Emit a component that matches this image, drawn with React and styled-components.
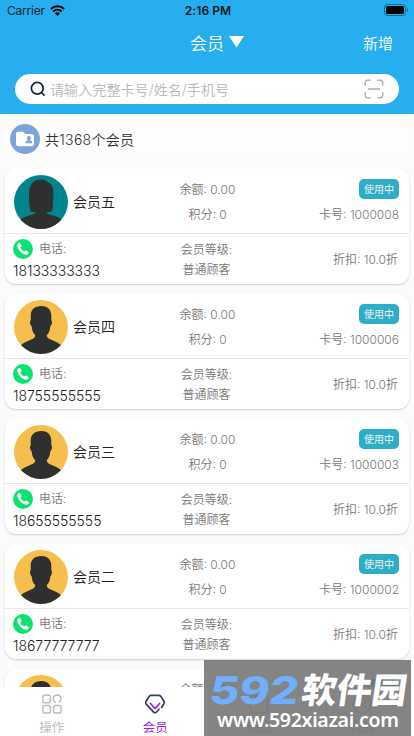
import styled, { createGlobalStyle } from 'styled-components'

const members = [
    { name: '会员五', phone: '18133333333', card: '1000008', female: true },
    { name: '会员四', phone: '18755555555', card: '1000006' },
    { name: '会员三', phone: '18655555555', card: '1000003' },
    { name: '会员二', phone: '18677777777', card: '1000002' },
    { name: '会员一', phone: '18666666666', card: '1000001' },
]

function Avatar({ female }) {
    return (
        <svg width='54' height='54' viewBox='0 0 54 54'>
            <clipPath id={female ? 'clipF' : 'clipM'}><circle cx='27' cy='27' r='27' /></clipPath>
            <circle cx='27' cy='27' r='27' fill={female ? '#00858f' : '#f6bf4d'} />
            <g clipPath={female ? 'url(#clipF)' : 'url(#clipM)'} fill='#2d302f'>
                {female
                    ? <path d='M27 4.500c3-.2 5 1.100 7 3 4 1 5.500 6 5.400 11l-.5 11c0 4-.5 6.500-2.200 7.500L32 37c1 2 3.500 2.500 6 3.200 4 1.300 7 2 11 5V54H5v-8c3-3.500 7-4.500 11-5.800 2.500-.7 5-1.200 6-3.200h-5c-1.500-4-2-8-2-13v-6c0-8 4-13.500 12-13.500z' />
                    : <path d='M27 6c5.500-.2 10 3 10.300 9v5.500c1.300.4.7 4.500-1 5.900-.4 4-1.300 6.600-3.500 8.600 0 3 2.500 4 5 5 4 1.700 7.200 3 10.200 6V54H6v-8c3-3 6.200-4.300 10.200-6 2.500-1 5-2 5-5-2.200-2-3.200-4.600-3.500-8.600-1.700-1.400-2.300-5.500-1-5.900V15C17 9 21.500 6.200 27 6z' />}
            </g>
        </svg>
    )
}

function MemberCard({ data }) {
    return (
        <Card>
            <CardTop>
                <Person>
                    <Avatar female={data.female} />
                    <Name>{data.name}</Name>
                </Person>
                <Middle $gap='7px'>
                    <span>余额: 0.00</span>
                    <span>积分: 0</span>
                </Middle>
                <Right>
                    <Badge>使用中</Badge>
                    <span>卡号: {data.card}</span>
                </Right>
            </CardTop>
            <CardBottom>
                <Contact>
                    <ContactLabel>
                        <svg width='20' height='20' viewBox='0 0 20 20'>
                            <circle cx='10' cy='10' r='10' fill='#09e36f' />
                            <path d='M5.600 4.100c.6-.5 1.200-.4 1.600.2l1.200 2c.3.600.2 1-.3 1.400l-.7.700c.7 1.700 2.100 3.100 4 4.200l.9-.8c.5-.4 1-.4 1.500 0l1.700 1.300c.6.5.6 1 .1 1.500-1 1.200-2.100 1.500-3.600 1C8.200 14.300 5.200 10.900 4.300 7.200c-.3-1.300.1-2.300 1.300-3.100z' fill='#fff' />
                        </svg>
                        <span>电话:</span>
                    </ContactLabel>
                    <Phone>{data.phone}</Phone>
                </Contact>
                <Middle $gap='2px'>
                    <span>会员等级:</span>
                    <span>普通顾客</span>
                </Middle>
                <Right>
                    <span>折扣: 10.0折</span>
                </Right>
            </CardBottom>
        </Card>
    )
}

function App() {
    return (
        <Screen>
            <GlobalStyle />
            <Header>
                <StatusBar>
                    <Carrier>
                        Carrier
                        <svg width='15' height='11' viewBox='0 0 15 11'>
                            <path d='M.9 4a9.600 9.600 0 0 1 13.200 0M3.300 6.500a6.200 6.200 0 0 1 8.400 0' fill='none' stroke='#000' strokeWidth='2' />
                            <path d='M7.500 11 5 8.500a3.700 3.700 0 0 1 5 0z' />
                        </svg>
                    </Carrier>
                    <Time>2:16 PM</Time>
                    <Battery>
                        <svg width='25' height='12' viewBox='0 0 25 12'>
                            <rect x='.5' y='.5' width='21' height='11' rx='3' fill='none' stroke='#13668d' />
                            <rect x='2' y='2' width='18' height='8' rx='1.600' />
                            <path d='M23 4c1.600.5 1.600 3.500 0 4z' fill='#13668d' />
                        </svg>
                    </Battery>
                </StatusBar>
                <TitleRow>
                    <Title>
                        会员
                        <svg width='15' height='12' viewBox='0 0 15 12'><path d='M0 0h15L7.500 11.500z' fill='#fff' /></svg>
                    </Title>
                    <AddButton>新增</AddButton>
                </TitleRow>
                <Search>
                    <svg width='16' height='16' viewBox='0 0 16 16' fill='none' stroke='#15253b' strokeWidth='1.700' strokeLinecap='round'>
                        <circle cx='7.300' cy='7.200' r='5.900' />
                        <path d='m11.400 11.500 2.600 2.600' />
                    </svg>
                    <Placeholder>请输入完整卡号/姓名/手机号</Placeholder>
                    <svg width='20' height='20' viewBox='0 0 20 20' fill='none' stroke='#aaa' strokeWidth='1.300' strokeLinecap='round'>
                        <path d='M1.200 6.300V4a2.800 2.800 0 0 1 2.800-2.800h2.300M13.700 1.200H16A2.800 2.800 0 0 1 18.800 4v2.300M18.800 13.700V16a2.800 2.800 0 0 1-2.800 2.800h-2.300M6.300 18.800H4A2.800 2.800 0 0 1 1.200 16v-2.300M4.500 10h11' />
                    </svg>
                </Search>
            </Header>
            <Summary>
                <svg width='30' height='30' viewBox='0 0 30 30'>
                    <circle cx='15' cy='15' r='15' fill='#7ca4d8' />
                    <path d='M8 7.800h5l2.500 2.300H22a2 2 0 0 1 2 2V20a2.300 2.300 0 0 1-2.300 2.300H8.300A2.300 2.300 0 0 1 6 20V9.800a2 2 0 0 1 2-2z' fill='#fff' />
                    <circle cx='18.800' cy='14' r='2' fill='#7ca4d8' />
                    <path d='M17.800 15h2l.3 1.500 2 1v1.800h-6.600v-1.800l2-1z' fill='#7ca4d8' />
                </svg>
                共1368个会员
            </Summary>
            <List>
                {members.map(member => <MemberCard key={member.card} data={member} />)}
            </List>
            <TabBar>
                <Tab>
                    <svg width='20' height='20' viewBox='0 0 20 20' fill='none' stroke='#bebebe' strokeWidth='1.500' strokeLinecap='round'>
                        <rect x='.9' y='1.200' width='7.500' height='7.500' rx='1.800' />
                        <rect x='.9' y='11.500' width='7.500' height='7.500' rx='1.800' />
                        <rect x='11.500' y='11.500' width='7.500' height='7.500' rx='1.800' />
                        <path d='M17 8.300c3.500-2.100 2-7.200-1.800-7.200-4.300 0-5.200 5.400-1.900 7.200' />
                    </svg>
                    操作
                </Tab>
                <Tab $active>
                    <svg width='22' height='20' viewBox='0 0 22 20' fill='none' strokeWidth='1.700' strokeLinecap='round' strokeLinejoin='round'>
                        <path d='M17.500 13.500 20 9.800c.5-.8.5-1.500 0-2.300l-3-5c-.5-.8-1-1.200-2-1.200H7c-1 0-1.500.4-2 1.200l-3 5c-.5.8-.5 1.500 0 2.300l7.400 8c1.200 1.300 2.300 1.200 3.400-.1l2.200-2.500' stroke='#334157' />
                        <path d='m6.500 9.500 4 4.600c.4.400.7.4 1 0l4-4.600' stroke='#a51bf4' />
                    </svg>
                    会员
                </Tab>
                <Tab>
                    <svg width='20' height='20' viewBox='0 0 20 20' fill='none' stroke='#bebebe' strokeWidth='1.500'>
                        <rect x='1.500' y='1.500' width='17' height='17' rx='2' />
                        <path d='M6.500 2v4h7V2' />
                    </svg>
                    商品
                </Tab>
                <Tab>
                    <svg width='20' height='20' viewBox='0 0 20 20' fill='none' stroke='#bebebe' strokeWidth='1.500'>
                        <circle cx='10' cy='10' r='9' />
                        <circle cx='10' cy='7' r='3.500' />
                        <path d='M3 16c3-5 11-5 14 0' />
                    </svg>
                    我的
                </Tab>
            </TabBar>
            <Watermark>
                <Brand>
                    <BrandNumber>592</BrandNumber>
                    <BrandName>软件园</BrandName>
                </Brand>
                <Site>www.592xiazai.com</Site>
            </Watermark>
        </Screen>
    )
}

export default App

const GlobalStyle = createGlobalStyle`
    * {
        box-sizing: border-box;
    }

    body {
        margin: 0;
        overflow: hidden;
        font-family: Inter, 'Noto Sans CJK SC', sans-serif;
        font-weight: 350;
    }

    svg {
        display: block;
        flex-shrink: 0;
    }
`

const Screen = styled.div`
    position: relative;
    display: flex;
    flex-direction: column;
    width: 414px;
    height: 736px;
    overflow: hidden;
    background: #fbfbfb;
`

const Header = styled.header`
    height: 114px;
    flex-shrink: 0;
    background: #27aeee;
`

const StatusBar = styled.div`
    display: grid;
    grid-template-columns: 1fr auto 1fr;
    align-items: center;
    height: 20px;
    padding: 1px 5px 0 7px;
    font-size: 12px;
    font-weight: 400;
    color: #10242f;
`

const Carrier = styled.div`
    display: flex;
    align-items: center;
    gap: 5px;
    letter-spacing: -.2px;
`

const Time = styled.div`
    font-size: 12px;
    font-weight: 600;
    letter-spacing: .1px;
    color: #061820;
`

const Battery = styled.div`
    justify-self: end;
    margin-top: -1px;
`

const TitleRow = styled.div`
    display: grid;
    grid-template-columns: 1fr auto 1fr;
    align-items: center;
    height: 44px;
    padding: 0 21px 0 41px;
    color: #fff;
`

const Title = styled.div`
    grid-column: 2;
    display: flex;
    align-items: center;
    gap: 5px;
    font-size: 17px;
`

const AddButton = styled.div`
    justify-self: end;
    font-size: 15px;
`

const Search = styled.div`
    display: flex;
    align-items: center;
    height: 30px;
    margin: 10px 15px 0;
    padding: 0 15px;
    border-radius: 15px;
    background: #fff;
`

const Placeholder = styled.span`
    flex: 1;
    margin-left: 4px;
    font-size: 14px;
    letter-spacing: .1px;
    color: #b8b8b8;
`

const Summary = styled.div`
    display: flex;
    align-items: center;
    flex-shrink: 0;
    gap: 5px;
    height: 40px;
    margin: 5px 5px 10px;
    padding: 0 5px;
    border-radius: 8px;
    background: #fdfdfd;
    font-size: 14px;
    letter-spacing: .3px;
    color: #333;
`

const List = styled.div`
    display: flex;
    flex-direction: column;
    flex: 1;
    min-height: 0;
    gap: 10px;
    padding: 0 5px;
    overflow: hidden;
`

const Card = styled.div`
    flex-shrink: 0;
    height: 115px;
    border-radius: 11px;
    background: #fff;
    box-shadow: 0 1px 2px rgba(0, 0, 0, .18);
    font-size: 12px;
    line-height: 18px;
    color: #777;
`

const CardTop = styled.div`
    display: grid;
    grid-template-columns: 131px 1fr 131px;
    height: 65px;
    padding: 2px 10px 0 9px;
    align-items: center;
    border-bottom: 1px solid #e5e5e5;
`

const CardBottom = styled.div`
    display: grid;
    grid-template-columns: 131px 1fr 131px;
    align-items: center;
    height: 50px;
    padding: 2px 11px 0 8px;
`

const Person = styled.div`
    display: flex;
    align-items: center;
    gap: 5px;
    margin-top: -1px;
`

const Name = styled.span`
    font-size: 14px;
    color: #222;
`

const Middle = styled.div`
    display: flex;
    flex-direction: column;
    align-items: center;
    gap: ${props => props.$gap};
    padding-left: 2px;
`

const Right = styled.div`
    display: flex;
    flex-direction: column;
    align-items: flex-end;
    gap: 7px;
`

const Badge = styled.span`
    height: 20px;
    margin-top: -1px;
    padding: 0 5px;
    border-radius: 5px;
    background: #2dadc6;
    color: #fff;
    font-size: 10px;
    line-height: 20px;
`

const Contact = styled.div`
    display: flex;
    flex-direction: column;
    gap: 3px;
    margin-top: -2px;
`

const ContactLabel = styled.div`
    display: flex;
    align-items: center;
    gap: 6px;
`

const Phone = styled.span`
    font-size: 14px;
    letter-spacing: -.05px;
    color: #222;
`

const TabBar = styled.nav`
    display: grid;
    grid-template-columns: repeat(4, 1fr);
    flex-shrink: 0;
    height: 49px;
    background: #fff;
`

const Tab = styled.div`
    display: flex;
    flex-direction: column;
    align-items: center;
    gap: 5px;
    padding-top: 7px;
    font-size: 12.5px;
    line-height: 17px;
    color: ${props => props.$active ? '#a51bf4' : '#b5b5b5'};
    font-weight: ${props => props.$active ? 400 : 350};
`

const Watermark = styled.div`
    position: absolute;
    right: 3px;
    bottom: 0;
    width: 207px;
    height: 76px;
    padding-top: 12px;
    background: rgba(112, 112, 112, .86);
    color: #fff;
`

const Brand = styled.div`
    display: flex;
    align-items: center;
    gap: 3px;
    height: 36px;
    padding-left: 6px;
    transform: skewX(-8deg);
`

const BrandNumber = styled.span`
    width: 89px;
    font-family: Inter, sans-serif;
    font-size: 38px;
    font-weight: 800;
    line-height: 36px;
    color: #71aefc;
    transform: scaleX(1.2);
    transform-origin: left;
`

const BrandName = styled.span`
    font-size: 35px;
    font-weight: 900;
    line-height: 36px;
`

const Site = styled.div`
    padding-left: 13px;
    font-family: 'Noto Sans', sans-serif;
    font-size: 19.5px;
    font-weight: 600;
    letter-spacing: -.3px;
    line-height: 24px;
`
